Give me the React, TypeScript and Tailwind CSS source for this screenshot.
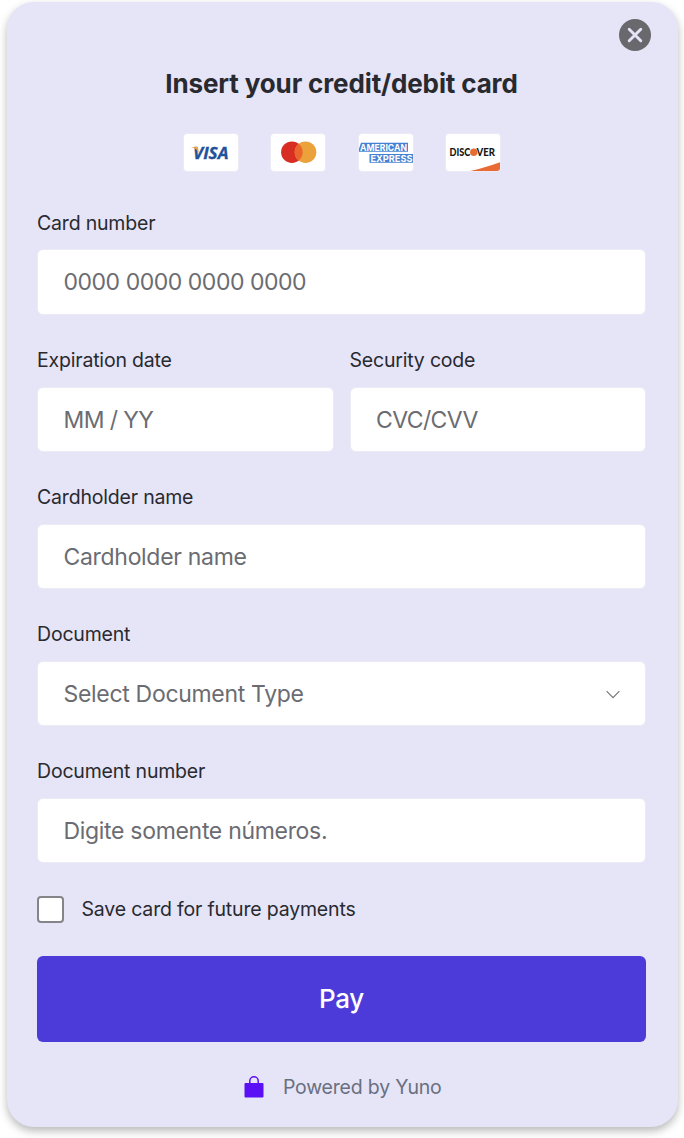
import type { ReactNode } from "react";

function Field({ label, placeholder, tall = false, tight = false, children }: { label: string; placeholder: string; tall?: boolean; tight?: boolean; children?: ReactNode }) {
  const box = tall ? "h-[66px] tracking-[-0.47px]" : tight ? "h-[65px] pt-px tracking-[-0.6px]" : "h-[65px] pt-px tracking-[-0.31px]";
  return (
    <label className="block min-w-0 flex-1">
      <span className={`block h-7 text-[19.5px] leading-7 tracking-[-0.19px] whitespace-nowrap text-[#282a30] ${tall ? "mb-3" : "mb-[13px]"}`}>{label}</span>
      <span className={`flex items-center justify-between rounded-[6px] border border-[#ebebf3] bg-white px-[25.5px] text-[23px] text-[#6b6c72] ${box}`}>
        <span className="whitespace-nowrap">{placeholder}</span>
        {children}
      </span>
    </label>
  );
}

function Brand({ children }: { children: ReactNode }) {
  return (
    <div className="h-[39px] w-[56px] overflow-hidden rounded-[4px] border border-[#ebeaf5] bg-white">
      <svg width="54" height="37" viewBox="0 0 54 37">{children}</svg>
    </div>
  );
}

export default function App() {
  return (
    <div className="h-[1138px] bg-white pt-[2px] pl-[7px] font-['Inter',sans-serif]">
      <main className="relative h-[1125px] w-[670.5px] rounded-[27px] bg-[#e6e4f7] pr-[31.5px] pl-[30px] pt-[64px] shadow-[0_4px_8px_rgba(0,0,0,0.28)]">
        <button aria-label="Close" className="absolute top-[17px] right-[26.5px] size-8">
          <svg width="32" height="32" viewBox="0 0 32 32">
            <circle cx="16" cy="16" r="16" fill="#69696d" />
            <path d="M10.2 10.2 21.8 21.8M21.8 10.2 10.2 21.8" stroke="#e6e4f7" strokeWidth="2.9" strokeLinecap="round" />
          </svg>
        </button>

        <h1 className="h-9 text-center text-[26px] leading-9 font-bold tracking-[-0.13px] whitespace-nowrap text-[#282a30]">Insert your credit/debit card</h1>

        <div className="mt-[31px] flex justify-center gap-[31.5px] pl-[0.5px]">
          <Brand>
            <text x="9" y="24.500" fontFamily="Open Sans" fontWeight="700" fontStyle="italic" fontSize="16" textLength="35.500" lengthAdjust="spacingAndGlyphs" fill="#22519b" stroke="#22519b" strokeWidth="0.3">VISA</text>
            <path d="M7.500 12.900h5c.8 0 1.300.5 1.500 1.200l.9 4.900c-1.300-3.100-4-5.200-7.400-5.800z" fill="#eaa53c" />
          </Brand>
          <Brand>
            <circle cx="20.900" cy="18.200" r="10.800" fill="#d82d22" />
            <circle cx="34.500" cy="18.200" r="10.800" fill="#eca23a" />
            <path d="M27.700 9.800a10.800 10.800 0 0 1 0 16.800a10.800 10.800 0 0 1 0-16.800z" fill="#ea662c" />
          </Brand>
          <Brand>
            <path d="M2 8.700h47v9H0v-3z M10.500 20h43.500v8.700H10.500z" fill="#4481d2" />
            <g fontFamily="Inter" fontWeight="700" fontSize="9.500" fill="#fff">
              <text x="1" y="16.700" textLength="47" lengthAdjust="spacingAndGlyphs">AMERICAN</text>
              <text x="11.500" y="27.800" textLength="42" lengthAdjust="spacingAndGlyphs">EXPRESS</text>
            </g>
          </Brand>
          <Brand>
            <g fontFamily="Lato" fontWeight="900" fontSize="10.500" fill="#151515">
              <text x="3.600" y="22.300" textLength="20.800" lengthAdjust="spacingAndGlyphs">DISC</text>
              <text x="30.600" y="22.300" textLength="18.400" lengthAdjust="spacingAndGlyphs">VER</text>
            </g>
            <circle cx="27.800" cy="18.300" r="3.700" fill="#e86b32" />
            <path d="M24 37C34.500 34.600 44.500 31.800 54 28.200V37z" fill="#e86b35" />
          </Brand>
        </div>

        <form className="mt-[37px] flex flex-col gap-[31px]">
          <Field label="Card number" placeholder="0000 0000 0000 0000" tall />
          <div className="flex gap-4">
            <Field label="Expiration date" placeholder="MM / YY" tight />
            <Field label="Security code" placeholder="CVC/CVV" tight />
          </div>
          <Field label="Cardholder name" placeholder="Cardholder name" />
          <Field label="Document" placeholder="Select Document Type">
            <svg width="14" height="9" viewBox="0 0 14 9" fill="none" stroke="#77777c" strokeWidth="1.200">
              <path d="M.6 1.200 7 7.600l6.400-6.400" />
            </svg>
          </Field>
          <Field label="Document number" placeholder="Digite somente números." />
        </form>

        <label className="mt-[32px] flex h-7 items-center gap-[17.500px]">
          <span className="mt-px size-[27px] shrink-0 rounded-[4px] border-2 border-[#858489] bg-white" />
          <span className="pt-[2px] text-[19.5px] tracking-[-0.18px] whitespace-nowrap text-[#282a30]">Save card for future payments</span>
        </label>

        <button className="mt-[33px] block h-[86px] w-full rounded-[6px] bg-[#4d3bd9] pb-[2px] text-[26px] font-medium tracking-[-0.3px] text-white">Pay</button>

        <footer className="mt-[31px] flex h-7 items-center justify-center pl-[3px]">
          <svg className="mr-[18.500px]" width="20" height="22" viewBox="0 0 20 22">
            <path d="M5.800 8V5a4.200 4.200 0 0 1 8.400 0v3" fill="none" stroke="#5b0ff5" strokeWidth="1.500" />
            <rect x="0.500" y="7" width="19" height="14.500" rx="1" fill="#5b0ff5" />
          </svg>
          <span className="pt-[2px] text-[19.5px] tracking-[-0.2px] whitespace-nowrap text-[#69707f]">Powered by Yuno</span>
        </footer>
      </main>
    </div>
  );
}
